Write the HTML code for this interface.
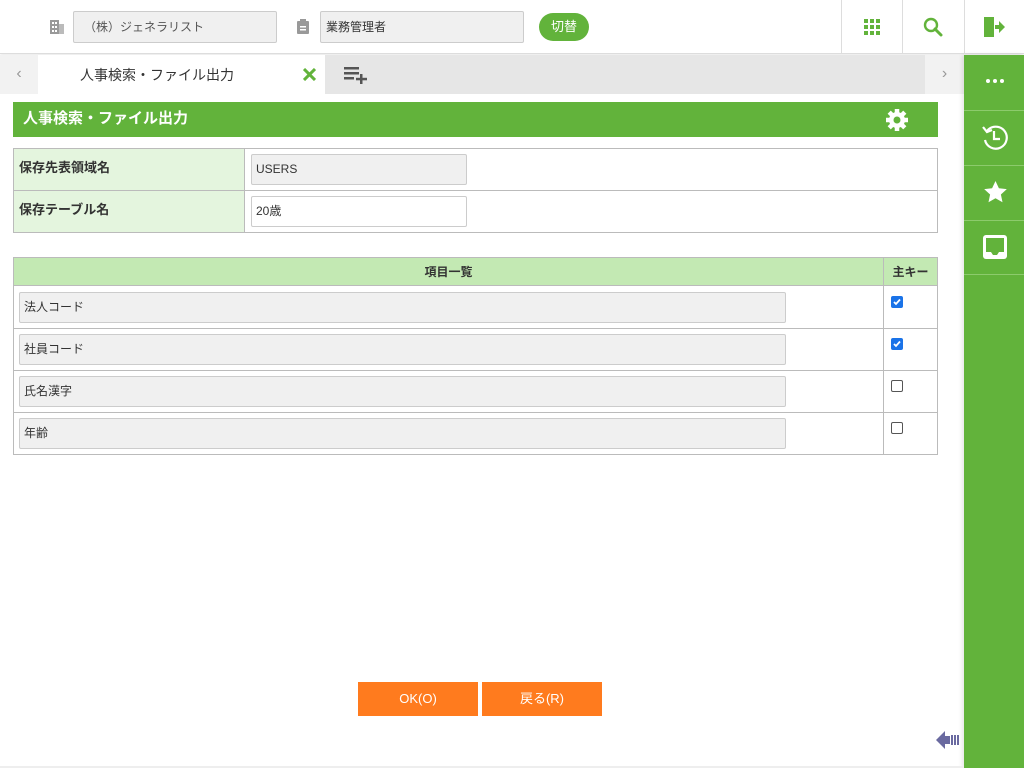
<!DOCTYPE html>
<html><head><meta charset="utf-8"><style>
*{box-sizing:border-box;margin:0;padding:0}
body{width:1024px;height:768px;position:relative;overflow:hidden;background:#fff;font-family:"Liberation Sans","Noto Sans CJK JP",sans-serif;font-size:13px;color:#333}
.a{position:absolute}
.inp{position:absolute;border:1px solid #ccc;border-radius:2px;background:#f0f0f0;font-size:12px;padding-left:4px;color:#333}
.g{background:#62b33b}
.cb{position:absolute;left:891px;width:12px;height:12px;border-radius:2px}
.on{background:#1a73e8}
.off{border:1px solid #555;background:#fff}
</style></head><body>
<div class="a" style="left:0;top:0;width:1024px;height:54px;border-bottom:1px solid #ddd;box-shadow:0 2px 3px rgba(0,0,0,.08)"></div>
<svg class="a" style="left:49px;top:19px" width="16" height="16"><rect x="1" y="1" width="9" height="14" fill="#999"/><rect x="10" y="5" width="5" height="10" fill="#bbb"/><g fill="#fff"><rect x="3" y="3" width="2" height="2"/><rect x="6" y="3" width="2" height="2"/><rect x="3" y="7" width="2" height="2"/><rect x="6" y="7" width="2" height="2"/><rect x="3" y="11" width="2" height="2"/><rect x="6" y="11" width="2" height="2"/></g></svg>
<div class="inp" style="left:73px;top:11px;width:204px;height:32px;line-height:30px;padding-left:10px;color:#555">（株）ジェネラリスト</div>
<svg class="a" style="left:296px;top:19px" width="14" height="16"><rect x="1" y="2" width="12" height="13" rx="1" fill="#999"/><rect x="4" y="0" width="6" height="4" fill="#999"/><rect x="4" y="7" width="6" height="1.5" fill="#fff"/><rect x="4" y="10" width="6" height="1.5" fill="#fff"/></svg>
<div class="inp" style="left:320px;top:11px;width:204px;height:32px;line-height:30px;padding-left:5px">業務管理者</div>
<div class="a g" style="left:539px;top:13px;width:50px;height:28px;border-radius:14px;color:#fff;font-size:13px;line-height:28px;text-align:center">切替</div>
<div class="a" style="left:841px;top:0;width:1px;height:54px;background:#ddd"></div>
<div class="a" style="left:902px;top:0;width:1px;height:54px;background:#ddd"></div>
<div class="a" style="left:964px;top:0;width:1px;height:54px;background:#ddd"></div>
<svg class="a" style="left:864px;top:19px" width="16" height="16" fill="#62b33b"><rect x="0" y="0" width="4" height="4"/><rect x="6" y="0" width="4" height="4"/><rect x="12" y="0" width="4" height="4"/><rect x="0" y="6" width="4" height="4"/><rect x="6" y="6" width="4" height="4"/><rect x="12" y="6" width="4" height="4"/><rect x="0" y="12" width="4" height="4"/><rect x="6" y="12" width="4" height="4"/><rect x="12" y="12" width="4" height="4"/></svg>
<svg class="a" style="left:923px;top:17px" width="20" height="20"><circle cx="8" cy="8" r="6" fill="none" stroke="#62b33b" stroke-width="2.4"/><path d="M12 12l6 6" stroke="#62b33b" stroke-width="3" stroke-linecap="round"/></svg>
<svg class="a" style="left:983px;top:16px" width="22" height="22" fill="#62b33b"><path d="M1 1h10v3H5v14h6v3H1z"/><path d="M5 2l6-1v20l-6-1z"/><path d="M12 9h4V5l6 6-6 6v-4h-4z"/></svg>
<div class="a" style="left:0;top:55px;width:964px;height:39px;background:#e6e6e6"></div>
<div class="a" style="left:0;top:55px;width:38px;height:39px;background:#f2f2f2;color:#999;text-align:center;line-height:38px;font-size:16px">‹</div>
<div class="a" style="left:925px;top:55px;width:39px;height:39px;background:#f2f2f2;color:#999;text-align:center;line-height:38px;font-size:16px">›</div>
<div class="a" style="left:38px;top:55px;width:287px;height:39px;background:#fff"></div>
<div class="a" style="left:80px;top:65px;font-size:14px;color:#333">人事検索・ファイル出力</div>
<svg class="a" style="left:303px;top:68px" width="13" height="13"><path d="M1 1l11 11M12 1L1 12" stroke="#62b33b" stroke-width="3"/></svg>
<svg class="a" style="left:344px;top:66px" width="24" height="18" fill="#555"><rect x="0" y="1" width="15" height="2.5"/><rect x="0" y="6" width="15" height="2.5"/><rect x="0" y="11" width="10" height="2.5"/><rect x="16" y="8" width="2.5" height="10"/><rect x="12" y="11.8" width="11" height="2.5"/></svg>
<div class="a g" style="left:964px;top:55px;width:60px;height:713px;box-shadow:-2px 0 4px rgba(0,0,0,.1)"></div>
<div class="a" style="left:964px;top:110px;width:60px;height:1px;background:#8ccb6c"></div>
<div class="a" style="left:964px;top:165px;width:60px;height:1px;background:#8ccb6c"></div>
<div class="a" style="left:964px;top:220px;width:60px;height:1px;background:#8ccb6c"></div>
<div class="a" style="left:964px;top:274px;width:60px;height:1px;background:#8ccb6c"></div>
<svg class="a" style="left:985px;top:78px" width="20" height="6" fill="#fff"><circle cx="3" cy="3" r="2"/><circle cx="10" cy="3" r="2"/><circle cx="17" cy="3" r="2"/></svg>
<svg class="a" style="left:981px;top:123px" width="28" height="28" fill="none" stroke="#fff" stroke-width="2.2"><path d="M6 8A11 11 0 1 1 4 17"/><path d="M2 4l4 5 5-2" /><path d="M13 8v8h6"/></svg>
<svg class="a" style="left:983px;top:180px" width="25" height="24"><path d="M12.5 1l3.4 7.2 7.9.9-5.9 5.4 1.6 7.8-7-4-7 4 1.6-7.8L1.2 9.1l7.9-.9z" fill="#fff"/></svg>
<svg class="a" style="left:982px;top:234px" width="26" height="26"><rect x="1" y="1" width="24" height="24" rx="3" fill="#fff"/><path d="M4 4h18v14h-5l-2 3h-4l-2-3H4z" fill="#62b33b"/></svg>
<div class="a g" style="left:13px;top:102px;width:925px;height:35px;color:#fff;font-weight:bold;font-size:15px;line-height:33px;padding-left:10px">人事検索・ファイル出力</div>
<svg class="a" style="left:885px;top:108px" width="24" height="24"><g fill="#fff"><circle cx="12" cy="12" r="8"/><g stroke="#fff" stroke-width="4.5"><path d="M12 1v22M1 12h22M4.2 4.2l15.6 15.6M19.8 4.2L4.2 19.8"/></g></g><circle cx="12" cy="12" r="3.5" fill="#62b33b"/></svg>
<div class="a" style="left:13px;top:148px;width:925px;height:85px;border:1px solid #bbb"></div>
<div class="a" style="left:14px;top:149px;width:231px;height:83px;background:#e4f5de;border-right:1px solid #bbb"></div>
<div class="a" style="left:14px;top:190px;width:923px;height:1px;background:#bbb"></div>
<div class="a" style="left:19px;top:157px;font-weight:bold;font-size:13px">保存先表領域名</div>
<div class="a" style="left:19px;top:199px;font-weight:bold;font-size:13px">保存テーブル名</div>
<div class="inp" style="left:251px;top:154px;width:216px;height:31px;line-height:29px">USERS</div>
<div class="inp" style="left:251px;top:196px;width:216px;height:31px;line-height:29px;background:#fff">20歳</div>
<div class="a" style="left:13px;top:257px;width:925px;height:198px;border:1px solid #bbb"></div>
<div class="a" style="left:14px;top:258px;width:923px;height:28px;background:#c3e9b3;border-bottom:1px solid #bbb"></div>
<div class="a" style="left:883px;top:258px;width:1px;height:196px;background:#bbb"></div>
<div class="a" style="left:14px;top:263px;width:869px;text-align:center;font-weight:bold;font-size:12px">項目一覧</div>
<div class="a" style="left:884px;top:263px;width:53px;text-align:center;font-weight:bold;font-size:12px">主キー</div>
<div class="a" style="left:14px;top:328px;width:923px;height:1px;background:#bbb"></div>
<div class="a" style="left:14px;top:370px;width:923px;height:1px;background:#bbb"></div>
<div class="a" style="left:14px;top:412px;width:923px;height:1px;background:#bbb"></div>
<div class="inp" style="left:19px;top:292px;width:767px;height:31px;line-height:29px">法人コード</div>
<div class="inp" style="left:19px;top:334px;width:767px;height:31px;line-height:29px">社員コード</div>
<div class="inp" style="left:19px;top:376px;width:767px;height:31px;line-height:29px">氏名漢字</div>
<div class="inp" style="left:19px;top:418px;width:767px;height:31px;line-height:29px">年齢</div>
<svg class="cb on" style="top:296px" viewBox="0 0 12 12"><path d="M3 6l2 2 4-4.5" stroke="#fff" stroke-width="1.8" fill="none"/></svg>
<svg class="cb on" style="top:338px" viewBox="0 0 12 12"><path d="M3 6l2 2 4-4.5" stroke="#fff" stroke-width="1.8" fill="none"/></svg>
<div class="cb off" style="top:380px"></div>
<div class="cb off" style="top:422px"></div>
<div class="a" style="left:358px;top:682px;width:120px;height:34px;background:#ff7b1e;color:#fff;text-align:center;line-height:34px;font-size:13px">OK(O)</div>
<div class="a" style="left:482px;top:682px;width:120px;height:34px;background:#ff7b1e;color:#fff;text-align:center;line-height:34px;font-size:13px">戻る(R)</div>
<svg class="a" style="left:936px;top:729px" width="26" height="22" fill="#6a6aa0"><path d="M0 11l9-9v5h5v8H9v5z"/><rect x="15" y="6" width="2" height="10"/><rect x="18" y="6" width="2" height="10"/><rect x="21" y="6" width="2" height="10"/></svg>
<div class="a" style="left:0;top:766px;width:964px;height:2px;background:#eee"></div>
</body></html>
